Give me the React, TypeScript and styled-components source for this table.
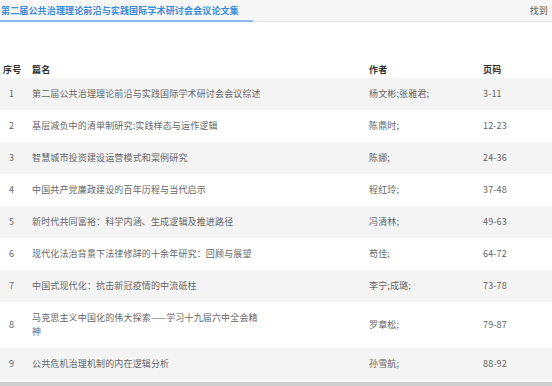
import { FC } from 'react'
import styled, { createGlobalStyle } from 'styled-components'

const GlobalStyle = createGlobalStyle`
  html, body {
    margin: 0;
    padding: 0;
    background: #fff;
  }
  body {
    font-family: "Noto Sans CJK SC", "Noto Sans", sans-serif;
    font-size: 9px;
    letter-spacing: 0.15px;
  }
`

const Page = styled.div`
  width: 552px;
  height: 386px;
  display: flex;
  flex-direction: column;
  overflow: hidden;
`

const TabBar = styled.div`
  height: 22px;
  display: flex;
  align-items: stretch;
  justify-content: space-between;
  background: #f7f7f7;
  border-bottom: 1px solid #e4e4e4;
`

const ActiveTab = styled.div`
  width: 253px;
  padding-left: 1px;
  display: flex;
  align-items: center;
  box-sizing: border-box;
  font-weight: 700;
  color: #3a8bdb;
  border-bottom: 2px solid #8dbbe9;
  margin-bottom: -1px;
`

const FoundLabel = styled.div`
  display: flex;
  align-items: center;
  padding-right: 4px;
  color: #555;
`

const Table = styled.div`
  margin-top: 40px;
  display: flex;
  flex-direction: column;
`

const Row = styled.div<{ $head?: boolean; $shaded?: boolean }>`
  display: grid;
  grid-template-columns: 26px 343px 114px 1fr;
  align-items: center;
  padding: ${({ $head }) => ($head ? '1px 0' : '9px 0')};
  line-height: 14px;
  background: ${({ $shaded }) => ($shaded ? '#f4f4f4' : '#fff')};
  color: ${({ $head }) => ($head ? '#333' : '#666')};
  font-weight: ${({ $head }) => ($head ? 700 : 400)};
`

const NoCell = styled.div<{ $head?: boolean }>`
  padding-left: ${({ $head }) => ($head ? '3px' : '9px')};
`

const TitleCell = styled.div`
  padding-left: 6px;
  max-width: 231px;
`

const Cell = styled.div``

const BottomBar = styled.div`
  margin-top: 2px;
  height: 4px;
  background: #cfcfcf;
`

interface Paper {
  title: string
  author: string
  pages: string
}

const papers: Paper[] = [
  { title: '第二届公共治理理论前沿与实践国际学术研讨会会议综述', author: '杨文彬;张雅君;', pages: '3-11' },
  { title: '基层减负中的清单制研究:实践样态与运作逻辑', author: '陈鼎时;', pages: '12-23' },
  { title: '智慧城市投资建设运营模式和案例研究', author: '陈娜;', pages: '24-36' },
  { title: '中国共产党廉政建设的百年历程与当代启示', author: '程红玲;', pages: '37-48' },
  { title: '新时代共同富裕：科学内涵、生成逻辑及推进路径', author: '冯清林;', pages: '49-63' },
  { title: '现代化法治背景下法律修辞的十余年研究：回顾与展望', author: '苟佳;', pages: '64-72' },
  { title: '中国式现代化：抗击新冠疫情的中流砥柱', author: '李宁;成璐;', pages: '73-78' },
  { title: '马克思主义中国化的伟大探索——学习十九届六中全会精神', author: '罗章松;', pages: '79-87' },
  { title: '公共危机治理机制的内在逻辑分析', author: '孙雪航;', pages: '88-92' },
]

const App: FC = () => (
  <Page>
    <GlobalStyle />
    <TabBar>
      <ActiveTab>第二届公共治理理论前沿与实践国际学术研讨会会议论文集</ActiveTab>
      <FoundLabel>找到</FoundLabel>
    </TabBar>
    <Table>
      <Row $head>
        <NoCell $head>序号</NoCell>
        <TitleCell>篇名</TitleCell>
        <Cell>作者</Cell>
        <Cell>页码</Cell>
      </Row>
      {papers.map((p, i) => (
        <Row key={p.pages} $shaded={i % 2 === 0}>
          <NoCell>{i + 1}</NoCell>
          <TitleCell>{p.title}</TitleCell>
          <Cell>{p.author}</Cell>
          <Cell>{p.pages}</Cell>
        </Row>
      ))}
    </Table>
    <BottomBar />
  </Page>
)

export default App
